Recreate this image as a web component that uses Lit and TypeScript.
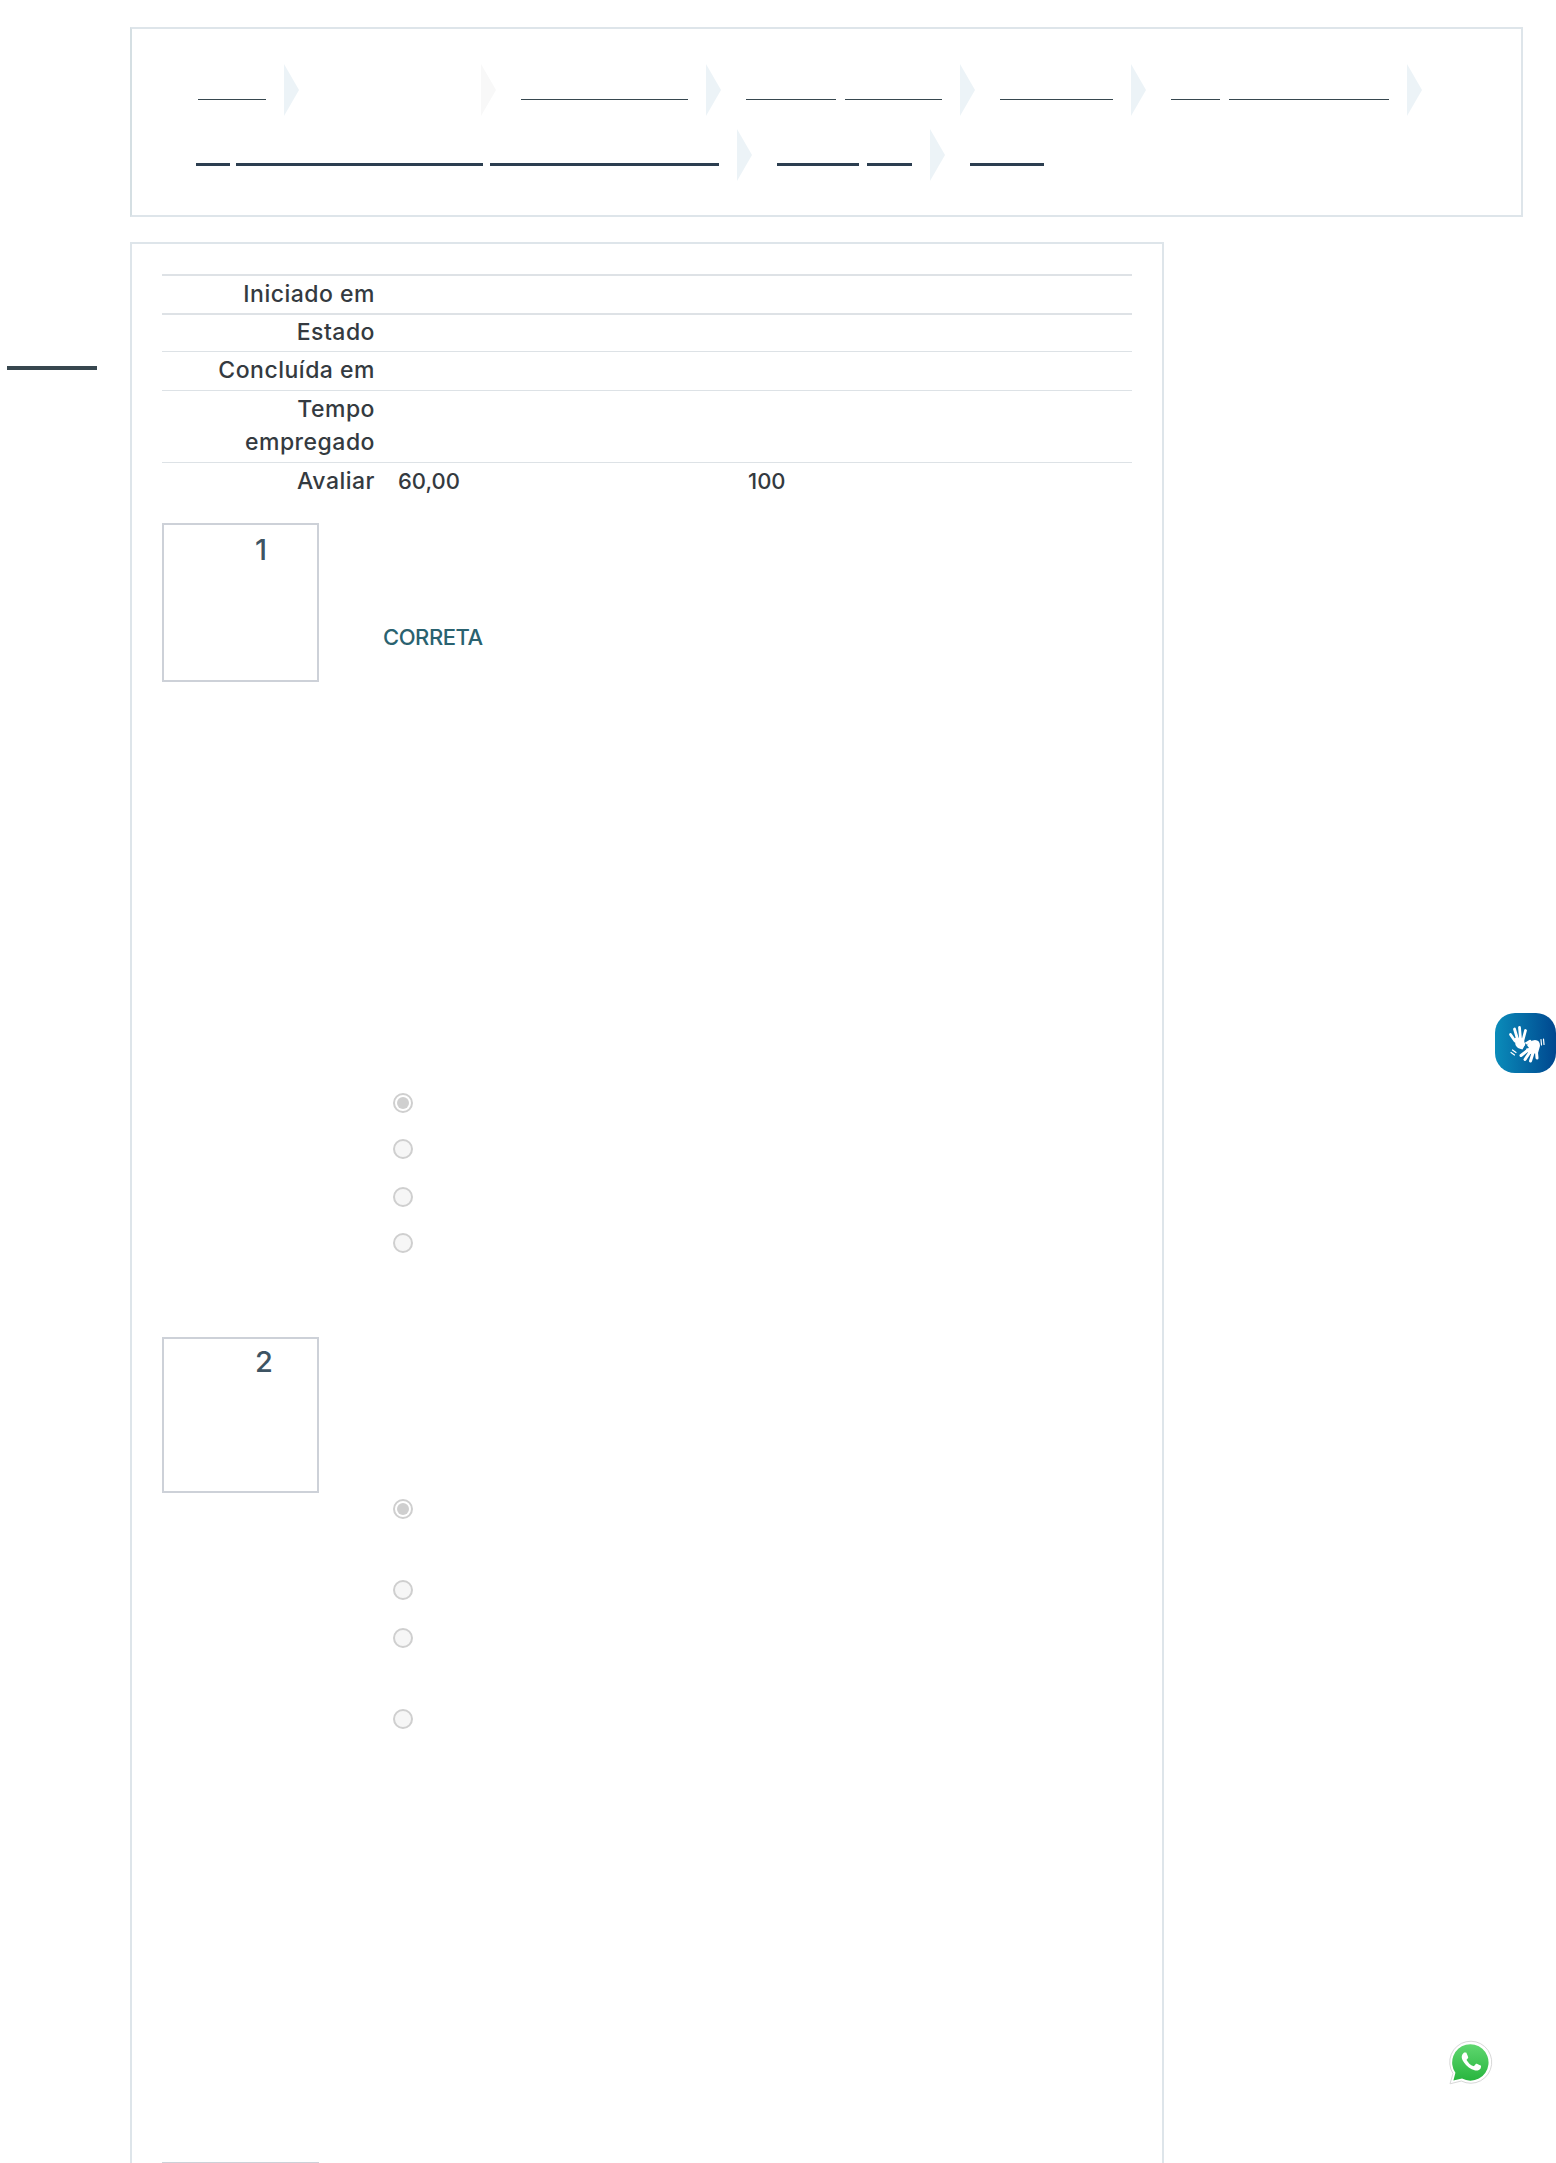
import { LitElement, html, css, svg } from "lit";
import { customElement } from "lit/decorators.js";

type Seg = { w: number; ml: number };
type Crumb = { segs: Seg[]; faint?: boolean };

const ROW1: Crumb[] = [
  { segs: [{ w: 68, ml: 0 }] },
  { segs: [], faint: true },
  { segs: [{ w: 167, ml: 0 }] },
  { segs: [{ w: 90, ml: 0 }, { w: 97, ml: 9 }] },
  { segs: [{ w: 113, ml: 0 }] },
  { segs: [{ w: 49, ml: 0 }, { w: 160, ml: 9 }] },
];
const ROW2: Crumb[] = [
  { segs: [{ w: 34, ml: 0 }, { w: 247, ml: 6 }, { w: 229, ml: 7 }] },
  { segs: [{ w: 82, ml: 0 }, { w: 45, ml: 8 }] },
];

@customElement("app-root")
export class AppRoot extends LitElement {
  static styles = css`
    :host {
      display: block;
      position: relative;
      width: 1556px;
      height: 2163px;
      overflow: hidden;
      background: #fff;
      font-family: "Inter", "Liberation Sans", sans-serif;
      font-weight: 500;
      color: #343a40;
      box-sizing: border-box;
    }
    .page {
      padding: 27px 33px 0 130px;
      display: flex;
      flex-direction: column;
      gap: 25px;
    }
    .crumbs {
      height: 190px;
      box-sizing: border-box;
      border: 2px solid #dee5ea;
      border-left-color: #d5dfe3;
      padding: 35px 0 0 66px;
      display: flex;
      flex-direction: column;
      gap: 13px;
    }
    .crumb-row {
      display: flex;
      height: 52px;
      align-items: center;
    }
    .crumb-row.second {
      margin-left: -2px;
    }
    .crumb-segs {
      display: flex;
      align-self: flex-start;
      padding-top: 35px;
    }
    .crumb-row.second .crumb-segs {
      padding-top: 34px;
    }
    .seg {
      display: block;
      height: 1px;
      background: #37474f;
    }
    .crumb-row.second .seg {
      height: 3px;
      background: #2c3e50;
    }
    .chev {
      display: block;
      width: 15px;
      height: 52px;
      margin: 0 25px 0 18px;
      flex: none;
      fill: #ecf3f7;
    }
    .chev.faint {
      fill: #f8f8f8;
      margin-left: 157px;
    }
    .side-bar {
      position: absolute;
      left: 7px;
      top: 366px;
      width: 90px;
      height: 4px;
      background: #37474f;
    }
    .card {
      box-sizing: border-box;
      width: 1034px;
      height: 1960px;
      border: 2px solid #dee5ea;
      padding: 30px 30px 0 30px;
      display: flex;
      flex-direction: column;
    }
    .summary {
      display: grid;
      grid-template-columns: 213px 1fr;
      font-size: 22px;
      line-height: 33px;
    }
    .summary-row {
      display: contents;
    }
    .th,
    .td {
      border-top: 1px solid #dde2e6;
      padding: 2px 0 3px;
    }
    .first .th,
    .first .td {
      border-top: 2px solid #dee2e6;
      padding: 2px 0 2px;
    }
    .second .th,
    .second .td {
      border-top: 2px solid #dee2e6;
      padding: 1px 0 2px;
    }
    .th {
      text-align: right;
      font-size: 23px;
      letter-spacing: 0.5px;
    }
    .td {
      display: flex;
    }
    .td.val {
      padding-left: 23px;
    }
    .grade {
      width: 350px;
    }
    .q {
      display: flex;
    }
    .q1 {
      margin-top: 22px;
      height: 814px;
    }
    .q2 {
      height: 825px;
    }
    .q3 {
      height: 10px;
    }
    .info {
      box-sizing: border-box;
      width: 157px;
      height: 159px;
      border: 2px solid #cdd1d8;
      flex: none;
      font-size: 29px;
      line-height: 1.2;
      color: #3e5463;
      padding: 8px 0 0 91px;
      font-weight: 500;
    }
    .q2 .info {
      height: 156px;
      padding-top: 6px;
    }
    .q3 .info {
      height: 10px;
    }
    .content {
      flex: 1;
      min-width: 0;
    }
    .q1 .content {
      padding: 0 0 0 64px;
    }
    .status {
      margin-top: 91px;
      font-size: 22px;
      line-height: 46px;
      color: #2a6270;
      font-weight: 500;
      letter-spacing: -0.45px;
    }
    .gap {
      height: 433px;
    }
    .answers {
      display: flex;
      flex-direction: column;
      padding-left: 74px;
    }
    .q1 .answers {
      padding-left: 10px;
    }
    .radio {
      box-sizing: border-box;
      width: 20px;
      height: 20px;
      border-radius: 50%;
      border: 2px solid #cfcfcf;
      background: #f6f6f6;
      display: flex;
      align-items: center;
      justify-content: center;
      flex: none;
    }
    .radio.on {
      background: #fff;
    }
    .radio.on::after {
      content: "";
      width: 12px;
      height: 12px;
      border-radius: 50%;
      background: #cfcfcf;
    }
    .libras {
      position: absolute;
      left: 1495px;
      top: 1013px;
      width: 61px;
      height: 60px;
      display: block;
    }
    .whats {
      position: absolute;
      left: 1447px;
      top: 2039px;
      width: 49px;
      height: 49px;
      display: block;
    }
  `;

  private segs(list: Seg[]) {
    return html`<div class="crumb-segs">
      ${list.map(
        (s) => html`<span class="seg" style="width:${s.w}px;margin-left:${s.ml}px"></span>`
      )}
    </div>`;
  }

  private chevron(faint = false) {
    return html`<svg class="chev ${faint ? "faint" : ""}" viewBox="0 0 15 52" aria-hidden="true">
      <polygon points="0,0 15,26 0,52"></polygon>
    </svg>`;
  }

  private row(items: Crumb[], second: boolean, tail?: Seg[]) {
    return html`<div class="crumb-row ${second ? "second" : ""}">
      ${items.map(
        (c) => html`${c.segs.length ? this.segs(c.segs) : ""}${this.chevron(!!c.faint)}`
      )}
      ${tail ? this.segs(tail) : ""}
    </div>`;
  }

  private question(cls: string, n: string, body: unknown) {
    return html`<section class="q ${cls}">
      <div class="info">${n}</div>
      <div class="content">${body}</div>
    </section>`;
  }

  private radios(list: { gap: number; on?: boolean }[]) {
    return html`<div class="answers">
      ${list.map(
        (r) =>
          html`<span class="radio ${r.on ? "on" : ""}" style="margin-top:${r.gap}px"></span>`
      )}
    </div>`;
  }

  private hands() {
    return svg`
      <defs>
        <linearGradient id="lg" x1="0" y1="0" x2="1" y2="0">
          <stop offset="0" stop-color="#0a8cba"></stop>
          <stop offset="1" stop-color="#00478f"></stop>
        </linearGradient>
      </defs>
      <rect width="61" height="60" rx="20" fill="url(#lg)"></rect>
      <g fill="none" stroke="#fff" stroke-linecap="round">
        <g stroke-width="2.8">
          <path d="M20 28 L15.5 21.5"></path>
          <path d="M22.5 26 L19.5 16"></path>
          <path d="M25.5 26 L24.5 14.5"></path>
          <path d="M28 27 L30.5 17.5"></path>
        </g>
        <path d="M27 33 L35 28" stroke-width="2.6"></path>
        <path d="M17.5 37 L21 39.5 M16 39.5 L19.5 42" stroke-width="1.2"></path>
        <path d="M46 26.5 L46.5 32 M48.5 26 L49 31.5" stroke-width="1.2"></path>
        <g stroke-width="3">
          <path d="M33 37 L26 42.5"></path>
          <path d="M35 39 L30 46.5"></path>
          <path d="M38 40 L35.5 48"></path>
          <path d="M41.5 39 L42 45"></path>
        </g>
      </g>
      <path d="M19.5 25 Q27 24 29 26.5 L30 32 L27.5 36.5 Q22 35.5 20.5 32 Z" fill="#fff"></path>
      <path d="M31 34 Q33 28 40 27 Q45 27 45 33 L43 40 L35 41 Q31 39 31 34 Z" fill="#fff"></path>
      <path d="M30.5 30 L34 35 L29 36 Z" fill="#0a70a8"></path>
    `;
  }

  private whatsapp() {
    return svg`
      <defs>
        <linearGradient id="wg" x1="0" y1="0" x2="0" y2="1">
          <stop offset="0" stop-color="#5fd76f"></stop>
          <stop offset="1" stop-color="#28b53f"></stop>
        </linearGradient>
      </defs>
      <path d="M3 44.8 L6 34.5 A21 21 0 1 1 14.3 42 Z" fill="#fff" stroke="#d8d8d8" stroke-width="1"></path>
      <path d="M6.4 41.4 L8.4 33.8 A18.2 18.2 0 1 1 15 39.6 Z" fill="url(#wg)"></path>
      <g transform="translate(5.1 3.3) scale(1.6)">
        <path fill="#fff" d="M17.472 14.382c-.297-.149-1.758-.867-2.03-.967-.273-.099-.471-.148-.67.15-.197.297-.767.966-.94 1.164-.173.199-.347.223-.644.075-.297-.15-1.255-.463-2.39-1.475-.883-.788-1.48-1.761-1.653-2.059-.173-.297-.018-.458.13-.606.134-.133.298-.347.446-.52.149-.174.198-.298.298-.497.099-.198.05-.371-.025-.52-.075-.149-.669-1.612-.916-2.207-.242-.579-.487-.5-.669-.51-.173-.008-.371-.01-.57-.01-.198 0-.52.074-.792.372-.272.297-1.04 1.016-1.04 2.479 0 1.462 1.065 2.875 1.213 3.074.149.198 2.096 3.2 5.077 4.487.709.306 1.262.489 1.694.625.712.227 1.36.195 1.871.118.571-.085 1.758-.719 2.006-1.413.248-.694.248-1.289.173-1.413-.074-.124-.272-.198-.57-.347"></path>
      </g>
    `;
  }

  render() {
    const q1Radios = this.radios([
      { gap: 0, on: true },
      { gap: 26 },
      { gap: 28 },
      { gap: 26 },
    ]);
    const q2Radios = this.radios([
      { gap: 162, on: true },
      { gap: 61 },
      { gap: 28 },
      { gap: 61 },
    ]);
    return html`
      <div class="page">
        <nav class="crumbs">
          ${this.row(ROW1, false)}
          ${this.row(ROW2, true, [{ w: 74, ml: 0 }])}
        </nav>
        <main class="card">
          <div class="summary">
            <div class="summary-row first"><div class="th">Iniciado em</div><div class="td"></div></div>
            <div class="summary-row second"><div class="th">Estado</div><div class="td"></div></div>
            <div class="summary-row"><div class="th">Concluída em</div><div class="td"></div></div>
            <div class="summary-row"><div class="th">Tempo<br />empregado</div><div class="td"></div></div>
            <div class="summary-row">
              <div class="th">Avaliar</div>
              <div class="td val"><span class="grade">60,00</span><span>100</span></div>
            </div>
          </div>
          ${this.question(
            "q1",
            "1",
            html`<div class="status">CORRETA</div>
              <div class="gap"></div>
              ${q1Radios}`
          )}
          ${this.question("q2", "2", q2Radios)}
          ${this.question("q3", "", "")}
        </main>
      </div>
      <div class="side-bar"></div>
      <svg class="libras" viewBox="0 0 61 60" aria-hidden="true">${this.hands()}</svg>
      <svg class="whats" viewBox="0 0 49 49" aria-hidden="true">${this.whatsapp()}</svg>
    `;
  }
}
